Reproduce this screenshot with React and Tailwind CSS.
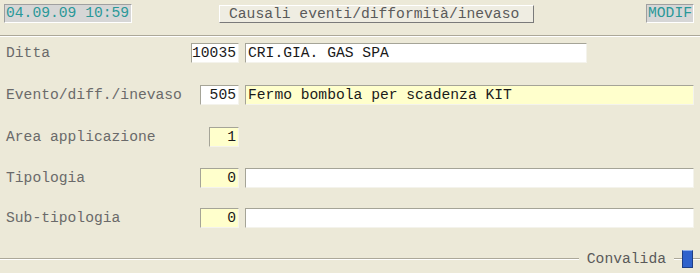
import React from 'react';

const rows = [
  { label: 'Ditta', code: '10035', codeW: 'w-[48px]', codeBg: 'bg-white', desc: 'CRI.GIA. GAS SPA', descW: 'w-[342px]', descBg: 'bg-white', mt: 'mt-[6px]' },
  { label: 'Evento/diff./inevaso', code: '505', codeW: 'w-[39px]', codeBg: 'bg-white', desc: 'Fermo bombola per scadenza KIT', descW: 'w-[449px]', descBg: 'bg-[#ffffcc]', mt: 'mt-[22px]' },
  { label: 'Area applicazione', code: '1', codeW: 'w-[30px]', codeBg: 'bg-[#ffffcc]', mt: 'mt-[22px]' },
  { label: 'Tipologia', code: '0', codeW: 'w-[39px]', codeBg: 'bg-[#ffffcc]', desc: '', descW: 'w-[449px]', descBg: 'bg-white', mt: 'mt-[21px]' },
  { label: 'Sub-tipologia', code: '0', codeW: 'w-[39px]', codeBg: 'bg-[#ffffcc]', desc: '', descW: 'w-[449px]', descBg: 'bg-white', mt: 'mt-[20px]' },
];

// sunken field border, classic Windows look
const sunken = 'border border-t-[#a5a497] border-l-[#a5a497] border-r-[#f4f3ec] border-b-[#f4f3ec]';

function Row({ label, code, codeW, codeBg, desc, descW, descBg, mt }) {
  return (
    <div className={`flex items-center h-[20px] ${mt}`}>
      <div className="w-[239px] flex items-center justify-between pl-[6px]">
        <span className="text-[#6a6a6a] leading-none">{label}</span>
        <div className={`${codeW} h-[20px] ${codeBg} ${sunken} flex items-center justify-end pr-[2px] text-[#1a1a1a] leading-none`}>
          {code}
        </div>
      </div>
      {desc !== undefined && (
        <div className={`ml-[6px] ${descW} h-[20px] ${descBg} ${sunken} flex items-center pl-[2px] text-[#1a1a1a] leading-none whitespace-pre`}>
          {desc}
        </div>
      )}
    </div>
  );
}

export default function App() {
  return (
    <div className="w-[700px] h-[273px] bg-[#ece9d8] overflow-hidden font-['Liberation_Mono',monospace] text-[14.67px]">
      {/* Header */}
      <div className="h-[36px] border-b border-[#aca899] flex items-start pt-[4px]">
        <div className="ml-[4px] w-[128px] h-[19px] bg-[#d6d6d6] border border-t-[#a0a0a0] border-l-[#a0a0a0] border-r-white border-b-white flex items-center pl-[1px] text-[#2a9898] leading-none">
          04.09.09 10:59
        </div>
        <button
          type="button"
          className="ml-[87px] mt-[1px] w-[315px] h-[18px] bg-[#efede2] border border-t-white border-l-white border-r-[#7a7a7a] border-b-[#7a7a7a] flex items-center pl-[9px] text-[#5a5a5a] leading-none"
        >
          Causali eventi/difformità/inevaso
        </button>
        <div className="ml-auto mr-[6px] w-[48px] h-[19px] bg-[#d6d6d6] border border-t-[#a0a0a0] border-l-[#a0a0a0] border-r-white border-b-white flex items-center pl-[1px] text-[#2a9898] leading-none">
          MODIF
        </div>
      </div>
      <div className="h-px bg-white" />

      {/* Fields */}
      {rows.map((r) => (
        <Row key={r.label} {...r} />
      ))}

      {/* Footer */}
      <div className="mt-[22px] h-[18px] flex items-center">
        <div className="flex-1 h-[2px] border-t border-[#aca899] border-b border-b-white" />
        <span className="mx-[8px] text-[#5a5a5a] leading-none">Convalida</span>
        <div className="w-[8px] h-[2px] border-t border-[#aca899] border-b border-b-white" />
        <div className="w-[11px] h-[18px] bg-[#2f62cc] border border-[#1e3f86] border-t-[#8fb0ee]" />
        <div className="w-[7px] h-[2px] border-t border-[#aca899] border-b border-b-white" />
      </div>
    </div>
  );
}
